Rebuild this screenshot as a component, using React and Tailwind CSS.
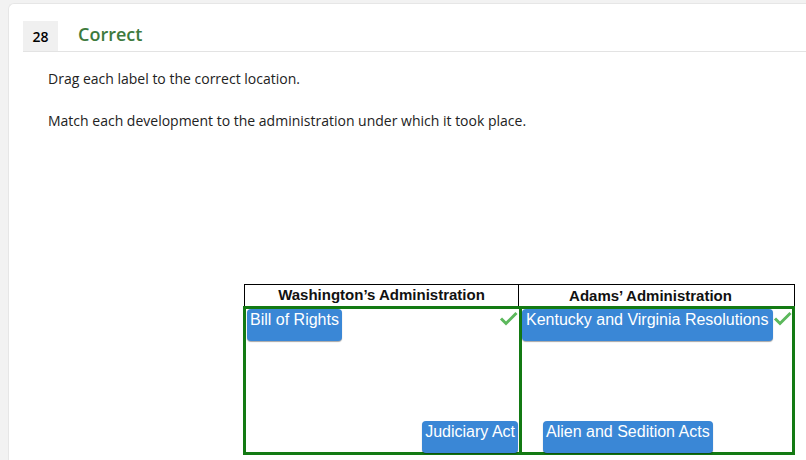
import React from 'react';

const Check = () => (
  <svg width="19" height="15" viewBox="0 0 19 15" className="shrink-0">
    <path d="M2 7.5 L7 12.5 L17.5 2" fill="none" stroke="#5cb85c" strokeWidth="3" />
  </svg>
);

const Label = ({ children, className = '' }) => (
  <div
    className={
      'h-[32px] rounded-[4px] bg-[#3a87d6] px-[3px] text-[16px] leading-[22px] text-white shadow-[0_1px_1px_rgba(0,0,0,0.35)] whitespace-nowrap ' +
      className
    }
    style={{ fontFamily: '"Liberation Sans", Arial, sans-serif' }}
  >
    {children}
  </div>
);

export default function App() {
  return (
    <div className="min-h-[460px] w-[806px] overflow-hidden bg-[#f2f2f2] pl-[8px] pt-[3px]">
      <div
        className="h-[457px] rounded-tl-[6px] border-l border-t border-[#e6e6e6] bg-white"
        style={{ fontFamily: '"Open Sans", "Noto Sans", sans-serif' }}
      >
        <div className="ml-[14px] mt-[17px] flex items-center border-b border-[#e3e3e3]">
          <div className="flex h-[30px] w-[35px] items-center justify-center bg-[#f0f0f0] text-[14px] font-semibold text-black">
            28
          </div>
          <div className="ml-[20px] -mt-[3px] text-[18px] font-semibold text-[#3d7a3d]">Correct</div>
        </div>

        <div className="ml-[39px] mt-[17px] text-[14px] leading-[20px] text-[#222]">
          <p>Drag each label to the correct location.</p>
          <p className="mt-[22px]">Match each development to the administration under which it took place.</p>
        </div>

        <div className="ml-[235px] mt-[153px] w-[551px]" style={{ fontFamily: '"Liberation Sans", Arial, sans-serif' }}>
          <div className="flex border border-black">
            <div className="flex h-[21px] w-[274px] items-center justify-center border-r border-black text-[15px] font-bold text-[#111]">
              Washington’s Administration
            </div>
            <div className="flex h-[21px] flex-1 items-center justify-center pr-[12px] pt-[2px] text-[15px] font-bold text-[#111]">
              Adams’ Administration
            </div>
          </div>
          <div className="-ml-px -mt-px flex h-[149px]">
            <div className="flex w-[276px] flex-col justify-between border-[3px] border-r-0 border-[#137a13] pl-px pr-px">
              <div className="flex items-start justify-between">
                <Label>Bill of Rights</Label>
                <div className="mt-[2px]"><Check /></div>
              </div>
              <Label className="-mb-[1px] self-end">Judiciary Act</Label>
            </div>
            <div className="flex flex-1 flex-col justify-between border-[3px] border-[#137a13]">
              <div className="flex items-start">
                <Label className="px-[4px]">Kentucky and Virginia Resolutions</Label>
                <div className="mt-[2px]"><Check /></div>
              </div>
              <Label className="-mb-[1px] ml-[21px] self-start">Alien and Sedition Acts</Label>
            </div>
          </div>
        </div>
      </div>
    </div>
  );
}
